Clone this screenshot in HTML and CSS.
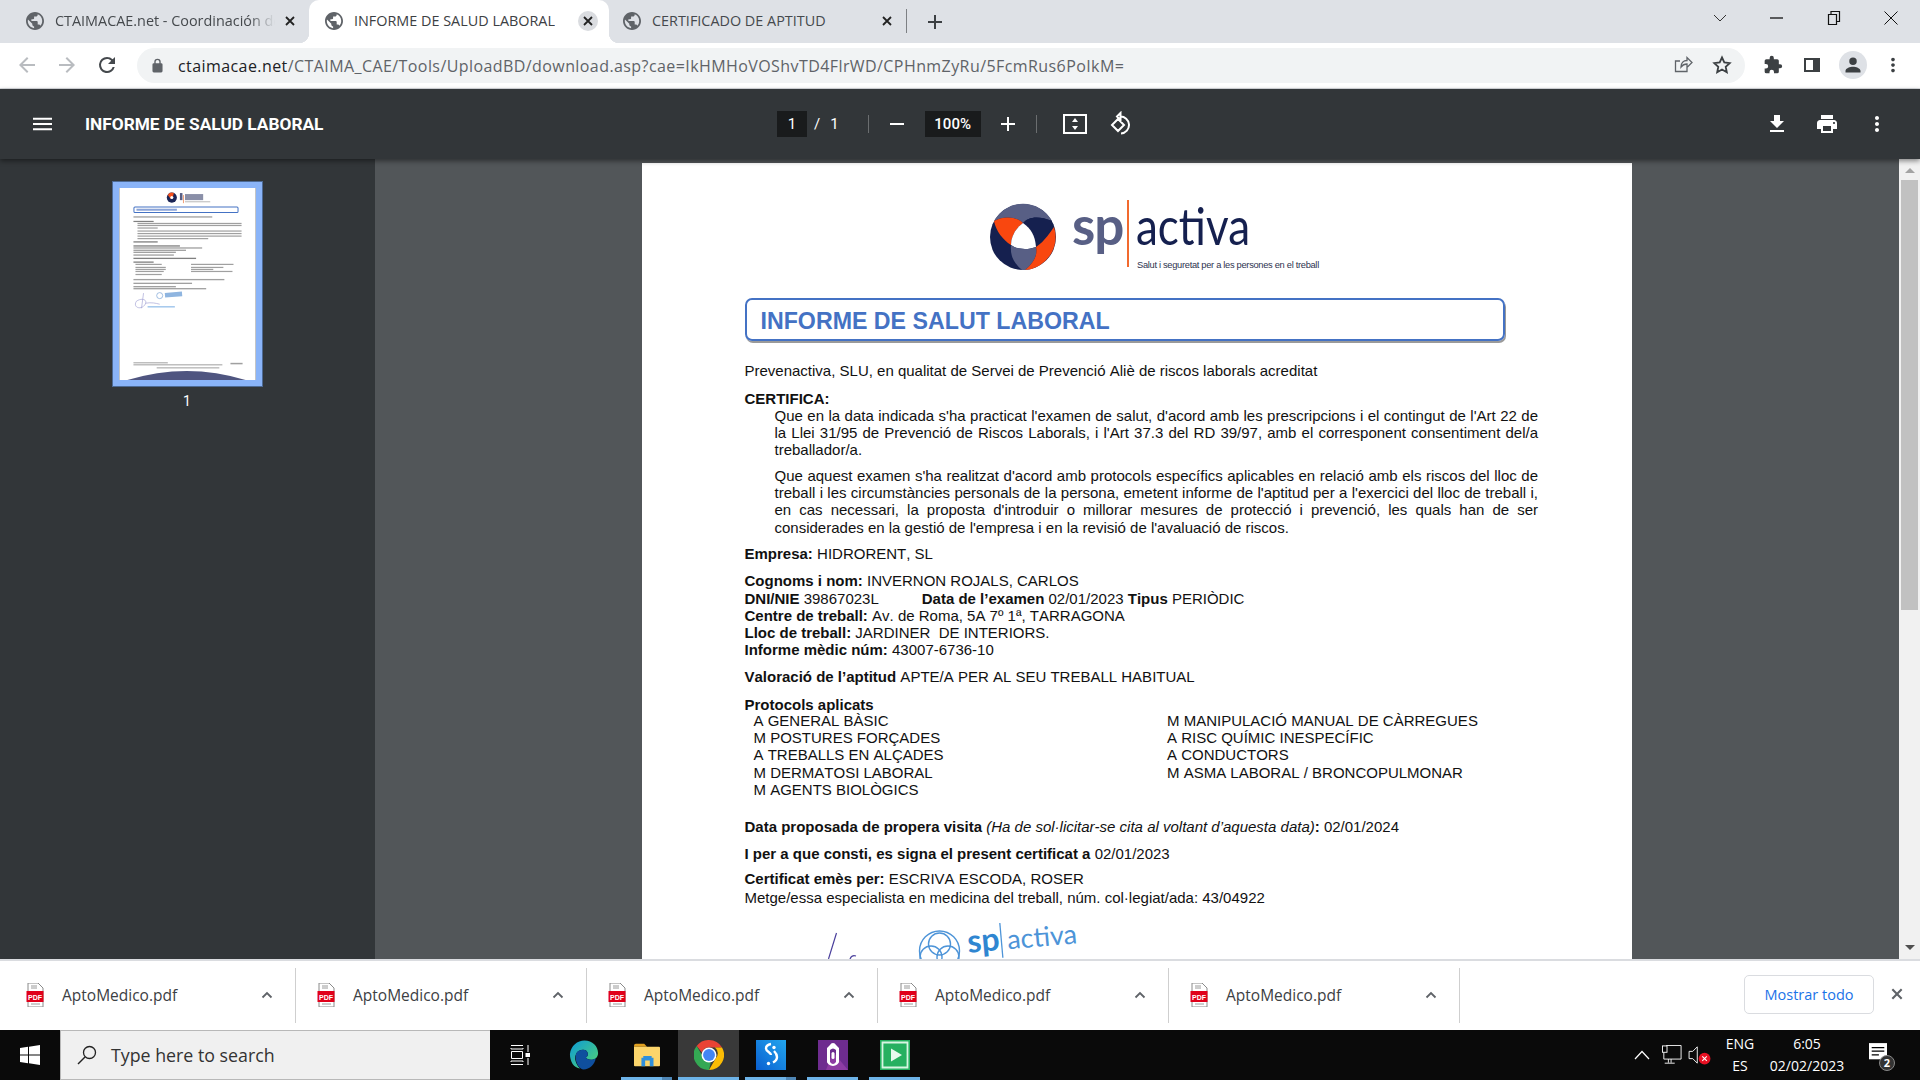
FILE: index.html
```html
<!DOCTYPE html>
<html lang="ca">
<head>
<meta charset="utf-8">
<title>INFORME DE SALUD LABORAL</title>
<link rel="stylesheet" href="styles.css">
</head>
<body>
<svg class="defs" width="0" height="0">
  <symbol id="globe" viewBox="2 2 20 20"><path d="M12 2C6.48 2 2 6.48 2 12s4.48 10 10 10 10-4.48 10-10S17.52 2 12 2zm-1 17.93c-3.95-.49-7-3.85-7-7.93 0-.62.08-1.21.21-1.79L9 15v1c0 1.1.9 2 2 2v1.93zm6.9-2.54c-.26-.81-1-1.39-1.9-1.39h-1v-3c0-.55-.45-1-1-1H8v-2h2c.55 0 1-.45 1-1V7h2c1.1 0 2-.9 2-2v-.41c2.93 1.19 5 4.06 5 7.41 0 2.08-.8 3.97-2.1 5.39z"/></symbol>
  <symbol id="x" viewBox="0 0 12 12"><path d="M2 2l8 8M10 2l-8 8" fill="none" stroke="currentColor" stroke-width="1.8"/></symbol>
  <symbol id="caret" viewBox="0 0 12 8"><path d="M1.5 6.5L6 2l4.5 4.5" fill="none" stroke="currentColor" stroke-width="1.8"/></symbol>
  <symbol id="pdf" viewBox="0 0 18 24"><path d="M2 0h10l5 5v19H2z" fill="#fff" stroke="#8a8a8a"/><path d="M5 3h6M5 5h6M5 21h9" stroke="#9a9a9a"/><rect x="0.5" y="8" width="17" height="11" fill="#e0001a"/><text x="9" y="16.5" class="pdf-label">PDF</text></symbol>
</svg>

<header class="tabstrip">
  <div class="tab first">
    <svg class="fav"><use href="#globe"/></svg>
    <span class="tab-title fade">CTAIMACAE.net - Coordinación de Actividades</span>
    <svg class="tab-x"><use href="#x"/></svg>
  </div>
  <div class="tab active">
    <svg class="fav"><use href="#globe"/></svg>
    <span class="tab-title">INFORME DE SALUD LABORAL</span>
    <span class="tab-x-bg"><svg class="tab-x"><use href="#x"/></svg></span>
  </div>
  <div class="tab third">
    <svg class="fav"><use href="#globe"/></svg>
    <span class="tab-title">CERTIFICADO DE APTITUD</span>
    <svg class="tab-x"><use href="#x"/></svg>
  </div>
  <svg class="newtab" viewBox="0 0 16 16"><path d="M8 1v14M1 8h14" stroke="#3c4043" stroke-width="2"/></svg>
  <div class="winctrl">
    <svg viewBox="0 0 14 14"><path d="M1 4l6 6 6-6" fill="none" stroke="#333" stroke-width="1"/></svg>
    <svg viewBox="0 0 14 14"><path d="M0 7h13" stroke="#111" stroke-width="1.3"/></svg>
    <svg viewBox="0 0 14 14"><path d="M1.5 3.5h8v10h-8zM4 3.5V.5h8.500v10h-3" fill="none" stroke="#111" stroke-width="1.2"/></svg>
    <svg viewBox="0 0 14 14"><path d="M.5.5l13 13M13.5.5l-13 13" stroke="#111" stroke-width="1"/></svg>
  </div>
</header>

<nav class="toolbar">
  <svg class="nav-ic ghost" viewBox="0 0 24 24"><path d="M20 11H7.830l5.590-5.590L12 4l-8 8 8 8 1.410-1.410L7.830 13H20z"/></svg>
  <svg class="nav-ic ghost" viewBox="0 0 24 24"><path d="M12 4l-1.410 1.410L16.170 11H4v2h12.170l-5.580 5.590L12 20l8-8z"/></svg>
  <svg class="nav-ic" viewBox="0 0 24 24"><path d="M17.650 6.350A7.960 7.960 0 0 0 12 4a8 8 0 1 0 7.730 10h-2.080A6 6 0 1 1 12 6c1.660 0 3.140.69 4.220 1.780L13 11h7V4z"/></svg>
  <div class="omnibox">
    <svg class="lock" viewBox="0 0 12 16"><path d="M10 5.500H9.500V4a3.500 3.500 0 0 0-7 0v1.500H2A1.500 1.500 0 0 0 .5 7v7A1.500 1.500 0 0 0 2 15.500h8a1.500 1.500 0 0 0 1.500-1.500V7A1.500 1.500 0 0 0 10 5.500zM4 4a2 2 0 0 1 4 0v1.500H4z"/></svg>
    <span class="url"><span class="host">ctaimacae.net</span>/CTAIMA_CAE/Tools/UploadBD/download.asp?cae=IkHMHoVOShvTD4FlrWD/CPHnmZyRu/5FcmRus6PoIkM=</span>
    <svg class="omni-ic" viewBox="0 0 20 20"><path d="M14 10v6.500H2.500V6H7M8 12c0-4 2.500-6.500 6-6.500V2.500l5 5-5 5V9c-2.500 0-4.500 1-6 3z" fill="none" stroke="#5f6368" stroke-width="1.3"/></svg>
    <svg class="omni-ic" viewBox="0 0 20 20"><path d="M10 2.500l2.300 5 5.400.6-4 3.700 1.100 5.400L10 14.500 5.200 17.200l1.100-5.400-4-3.700 5.400-.6z" fill="none" stroke="#3c4043" stroke-width="1.8"/></svg>
  </div>
  <svg class="tool-ic puzzle" viewBox="0 0 24 24"><path d="M20.500 11H19V7a2 2 0 0 0-2-2h-4V3.500a2.500 2.500 0 0 0-5 0V5H4a2 2 0 0 0-2 2v3.800h1.500a2.700 2.700 0 0 1 0 5.400H2V20a2 2 0 0 0 2 2h3.800v-1.500a2.700 2.700 0 0 1 5.400 0V22H17a2 2 0 0 0 2-2v-4h1.500a2.500 2.500 0 0 0 0-5z"/></svg>
  <svg class="tool-ic panel" viewBox="0 0 18 18"><path d="M1 2h16v14H1z" fill="#3c4043"/><path d="M3 4h7v10H3z" fill="#fff"/></svg>
  <span class="avatar"><svg viewBox="0 0 24 24"><path d="M12 12a4.500 4.500 0 1 0 0-9 4.500 4.500 0 0 0 0 9zm0 2c-3.300 0-9 1.700-9 5v2h18v-2c0-3.300-5.700-5-9-5z"/></svg></span>
  <svg class="tool-ic dots" viewBox="0 0 24 24"><path d="M12 8c1.100 0 2-.9 2-2s-.9-2-2-2-2 .9-2 2 .9 2 2 2zm0 2c-1.100 0-2 .9-2 2s.9 2 2 2 2-.9 2-2-.9-2-2-2zm0 6c-1.100 0-2 .9-2 2s.9 2 2 2 2-.9 2-2-.9-2-2-2z"/></svg>
</nav>

<section class="pdfbar">
  <div class="pdfbar-left">
    <svg class="pdf-ic menu" viewBox="3 6 18 12"><path d="M3 18h18v-2H3v2zm0-5h18v-2H3v2zm0-7v2h18V6H3z"/></svg>
    <span class="pdf-title">INFORME DE SALUD LABORAL</span>
  </div>
  <div class="pdfbar-mid">
    <span class="field page-field">1</span>
    <span class="pager">/</span>
    <span class="pager last">1</span>
    <span class="vsep"></span>
    <svg class="pdf-ic minus" viewBox="0 0 16 16"><path d="M1 7h14v2H1z"/></svg>
    <span class="field zoom-field">100%</span>
    <svg class="pdf-ic plus" viewBox="0 0 16 16"><path d="M7 1h2v6h6v2H9v6H7V9H1V7h6z"/></svg>
    <span class="vsep"></span>
    <svg class="pdf-ic fit" viewBox="0 0 24 20"><path d="M1 1h22v18H1z" fill="none" stroke="#fff" stroke-width="2"/><path d="M12 4l3 4H9zM12 16l-3-4h6z" fill="#fff"/></svg>
    <svg class="pdf-ic rotate" viewBox="0 0 24 24"><path d="M12.500 1L9 4.500 12.500 8zM12 4.500a8.500 8.500 0 0 1 1 17M10 7l6 6-6 6-6-6z" fill="none" stroke="#fff" stroke-width="2"/></svg>
  </div>
  <div class="pdfbar-right">
    <svg class="pdf-ic" viewBox="0 0 24 24"><path d="M19 9h-4V3H9v6H5l7 7 7-7zM5 18v2h14v-2H5z"/></svg>
    <svg class="pdf-ic" viewBox="0 0 24 24"><path d="M19 8H5c-1.660 0-3 1.340-3 3v6h4v4h12v-4h4v-6c0-1.660-1.340-3-3-3zm-3 11H8v-5h8v5zm3-7c-.55 0-1-.45-1-1s.45-1 1-1 1 .45 1 1-.45 1-1 1zm-1-9H6v4h12V3z"/></svg>
    <svg class="pdf-ic" viewBox="0 0 24 24"><path d="M12 8c1.100 0 2-.9 2-2s-.9-2-2-2-2 .9-2 2 .9 2 2 2zm0 2c-1.100 0-2 .9-2 2s.9 2 2 2 2-.9 2-2-.9-2-2-2zm0 6c-1.100 0-2 .9-2 2s.9 2 2 2 2-.9 2-2-.9-2-2-2z"/></svg>
  </div>
</section>

<main class="viewer">
  <aside class="sidebar">
    <div class="thumb">
      <svg viewBox="0 0 135 190" class="thumb-svg">
        <rect width="135" height="190" fill="#fff"/>
        <circle cx="52" cy="9.500" r="5" fill="#1b2556"/><path d="M48 7a5 5 0 0 1 6-2l-1 4-2 2z" fill="#f4511e"/><circle cx="52" cy="9.500" r="1.500" fill="#fff"/>
        <rect x="60" y="5" width="2.500" height="7" fill="#585f85"/><rect x="63" y="7" width="1" height="8" fill="#f2a07a"/><rect x="65" y="6" width="18" height="6" fill="#8a8fa8"/><rect x="65" y="13" width="25" height="1.200" fill="#c5c5c5"/>
        <rect x="14.500" y="18.700" width="103" height="5.600" rx="1" fill="#fff" stroke="#4472c4"/><rect x="17" y="20.500" width="40" height="2" fill="#8ba4d8"/>
        <g fill="#a0a0a0">
          <rect x="14" y="28" width="78" height="1.300"/><rect x="14" y="32.500" width="20" height="1.200" fill="#808080"/>
          <rect x="18" y="34.500" width="103" height="1.200"/><rect x="18" y="36.500" width="103" height="1.200"/><rect x="18" y="39" width="20" height="1.200"/>
          <rect x="18" y="42" width="103" height="1.200"/><rect x="18" y="44.500" width="103" height="1.200"/><rect x="18" y="47" width="103" height="1.200"/><rect x="18" y="49.500" width="70" height="1.200"/>
          <rect x="14" y="52.700" width="24" height="1.300" fill="#808080"/>
          <rect x="14" y="56.700" width="46" height="1.300" fill="#808080"/><rect x="14" y="58.700" width="68" height="1.300"/><rect x="14" y="61" width="52" height="1.300"/><rect x="14" y="63" width="42" height="1.300"/><rect x="14" y="65.700" width="40" height="1.300"/>
          <rect x="14" y="69" width="62" height="1.300" fill="#808080"/><rect x="14" y="72.700" width="20" height="1.300" fill="#808080"/>
          <rect x="16" y="75" width="26" height="1.200"/><rect x="16" y="78" width="30" height="1.200"/><rect x="16" y="80" width="30" height="1.200"/><rect x="16" y="82" width="28" height="1.200"/><rect x="16" y="85" width="26" height="1.200"/>
          <rect x="71" y="75" width="42" height="1.200"/><rect x="71" y="78" width="32" height="1.200"/><rect x="71" y="80" width="22" height="1.200"/><rect x="71" y="82" width="41" height="1.200"/>
          <rect x="14" y="90" width="90" height="1.300"/><rect x="14" y="93.700" width="58" height="1.300"/><rect x="14" y="97" width="42" height="1.300"/><rect x="14" y="99" width="72" height="1.300"/>
          <rect x="14" y="172.500" width="34" height="1"/><rect x="14" y="174.500" width="88" height="1"/><rect x="110" y="173" width="12" height="1.500"/><rect x="37" y="177.500" width="62" height="1"/>
        </g>
        <circle cx="40" cy="106.500" r="3" fill="none" stroke="#7ea6d8" stroke-width=".7"/><rect x="45" y="104" width="17" height="4.500" fill="#8fb5e0" transform="rotate(-5 45 104)"/>
        <path d="M24 104l-2 15M17 112c6-4 12-1 8 4s-12 2-8-4zM26 114c6-1 10 0 14 1" fill="none" stroke="#9a9ad0" stroke-width=".6"/>
        <rect x="28" y="117" width="27" height="1.200" fill="#8fbbe8"/>
        <path d="M8 190q59-18 117 0z" fill="#4f5580"/>
      </svg>
    </div>
    <span class="thumb-num">1</span>
  </aside>

  <div class="canvas">
    <article class="page">
      <svg class="logo" viewBox="0 0 345 90">
        <g transform="translate(41 42)">
          <circle r="33" fill="#15204f"/>
          <path d="M-29-16A33 33 0 0 1 29-16C15-22 5-20 0-14-6-20-18-22-29-16Z" fill="#585f85"/>
          <path d="M-29-16C-18-22-6-20 0-14-8-8-12 0-12 8-20 3-27-6-29-16Z" fill="#f9470f"/>
          <path d="M29-16C15-22 5-20 0-14 8-8 12-2 13 10 22 4 28-6 29-16Z" fill="#15204f"/>
          <path d="M0-14C8-8 12-2 13 10 5 13-5 13-12 8-12 0-8-8 0-14Z" fill="#fff"/>
          <path d="M-12 8C-5 13 5 13 13 10 15 18 10 27 2 33A33 33 0 0 1-1 33C-10 25-13 18-12 8Z" fill="#585f85"/>
          <path d="M13 10C22 4 28-6 31-10A33 33 0 0 1 2 33C10 27 15 18 13 10Z" fill="#f9470f"/>
        </g>
        <text x="90" y="50" class="logo-sp">sp</text>
        <rect x="145" y="5" width="2" height="67" fill="#f26a2e"/>
        <text x="154" y="50" class="logo-activa" textLength="114" lengthAdjust="spacingAndGlyphs">activa</text>
        <text x="155" y="73" class="logo-tag">Salut i seguretat per a les persones en el treball</text>
      </svg>

      <h1 class="doc-title">INFORME DE SALUT LABORAL</h1>

      <p class="line intro">Prevenactiva, SLU, en qualitat de Servei de Prevenció Aliè de riscos laborals acreditat</p>

      <p class="line head"><b>CERTIFICA:</b></p>
      <p class="just">Que en la data indicada s'ha practicat l'examen de salut, d'acord amb les prescripcions i el contingut de l'Art 22 de la Llei 31/95 de Prevenció de Riscos Laborals, i l'Art 37.3 del RD 39/97, amb el corresponent consentiment del/a treballador/a.</p>
      <p class="just second">Que aquest examen s'ha realitzat d'acord amb protocols específics aplicables en relació amb els riscos del lloc de treball i les circumstàncies personals de la persona, emetent informe de l'aptitud per a l'exercici del lloc de treball i, en cas necessari, la proposta d'introduir o millorar mesures de protecció i prevenció, les quals han de ser considerades en la gestió de l'empresa i en la revisió de l'avaluació de riscos.</p>

      <p class="line empresa"><b>Empresa:</b> HIDRORENT, SL</p>

      <div class="cognoms">
        <p class="line"><b>Cognoms i nom:</b> INVERNON ROJALS, CARLOS</p>
        <p class="line"><b>DNI/NIE</b> 39867023L<span class="tabgap"></span><b>Data de l’examen</b> 02/01/2023 <b>Tipus</b> PERIÒDIC</p>
        <p class="line"><b>Centre de treball:</b> Av. de Roma, 5A 7º 1ª, TARRAGONA</p>
        <p class="line"><b>Lloc de treball:</b> JARDINER&nbsp; DE INTERIORS.</p>
        <p class="line"><b>Informe mèdic núm:</b> 43007-6736-10</p>
      </div>

      <p class="line valoracio"><b>Valoració de l’aptitud</b> APTE/A PER AL SEU TREBALL HABITUAL</p>

      <p class="line protocols"><b>Protocols aplicats</b></p>
      <div class="proto-grid">
        <ul>
          <li>A GENERAL BÀSIC</li>
          <li>M POSTURES FORÇADES</li>
          <li>A TREBALLS EN ALÇADES</li>
          <li>M DERMATOSI LABORAL</li>
          <li>M AGENTS BIOLÒGICS</li>
        </ul>
        <ul>
          <li>M MANIPULACIÓ MANUAL DE CÀRREGUES</li>
          <li>A RISC QUÍMIC INESPECÍFIC</li>
          <li>A CONDUCTORS</li>
          <li>M ASMA LABORAL / BRONCOPULMONAR</li>
        </ul>
      </div>

      <p class="line propera"><b>Data proposada de propera visita</b> <i>(Ha de sol·licitar-se cita al voltant d’aquesta data)</i><b>:</b> 02/01/2024</p>
      <p class="line consti"><b>I per a que consti, es signa el present certificat a</b> 02/01/2023</p>
      <p class="line emes"><b>Certificat emès per:</b> ESCRIVA ESCODA, ROSER</p>
      <p class="line metge">Metge/essa especialista en medicina del treball, núm. col·legiat/ada: 43/04922</p>

      <svg class="stamp" viewBox="0 0 320 50">
        <path d="M51.500 19l-8 26M65 45c1-3 3-4 6-3" fill="none" stroke="#4a3f9c" stroke-width="1.200"/>
        <g fill="none" stroke="#4d94d8" stroke-width="1.400">
          <circle cx="154.500" cy="37" r="20"/><circle cx="146" cy="43" r="11"/><circle cx="163" cy="43" r="11"/><circle cx="154.500" cy="30" r="11"/>
        </g>
        <g transform="rotate(-5 215 30)">
          <text x="182.500" y="36" class="stamp-sp">sp</text>
          <rect x="216" y="9" width="1.300" height="35" fill="#4d94d8"/>
          <text x="222.500" y="36" class="stamp-activa">activa</text>
        </g>
      </svg>
    </article>
  </div>

  <div class="scrollbar">
    <span class="arrow up"></span>
    <span class="thumbbar"></span>
    <span class="arrow down"></span>
  </div>
</main>

<section class="downloads">
  <div class="dl"><svg class="dl-ic"><use href="#pdf"/></svg><span class="dl-name">AptoMedico.pdf</span><svg class="dl-caret"><use href="#caret"/></svg></div>
  <div class="dl"><svg class="dl-ic"><use href="#pdf"/></svg><span class="dl-name">AptoMedico.pdf</span><svg class="dl-caret"><use href="#caret"/></svg></div>
  <div class="dl"><svg class="dl-ic"><use href="#pdf"/></svg><span class="dl-name">AptoMedico.pdf</span><svg class="dl-caret"><use href="#caret"/></svg></div>
  <div class="dl"><svg class="dl-ic"><use href="#pdf"/></svg><span class="dl-name">AptoMedico.pdf</span><svg class="dl-caret"><use href="#caret"/></svg></div>
  <div class="dl"><svg class="dl-ic"><use href="#pdf"/></svg><span class="dl-name">AptoMedico.pdf</span><svg class="dl-caret"><use href="#caret"/></svg></div>
  <button class="showall">Mostrar todo</button>
  <svg class="dl-close"><use href="#x"/></svg>
</section>

<footer class="taskbar">
  <div class="start"><svg viewBox="0 0 20 20"><path d="M0 3l8-1.200V9.500H0zM9 1.700L20 0v9.500H9zM0 10.500h8v7.700L0 17zM9 10.500h11V20L9 18.300z" fill="#fff"/></svg></div>
  <div class="search">
    <svg viewBox="0 0 20 20"><circle cx="12.500" cy="7.500" r="6" fill="none" stroke="#222" stroke-width="1.300"/><path d="M8 12l-7 7" stroke="#222" stroke-width="1.400"/></svg>
    <span>Type here to search</span>
  </div>
  <div class="task taskview"><svg viewBox="0 0 20 20"><path d="M1 .5h12M1 19.500h12M1 3v1h12V3M1 17v-1h12v1M1.500 6.500h11v7h-11zM18 0v7M18 13v7" fill="none" stroke="#fff" stroke-width="1"/><rect x="15.500" y="8" width="5" height="4" fill="#fff"/></svg></div>
  <div class="task edge">
    <svg viewBox="0 0 32 32">
      <defs><linearGradient id="edgeA" x1="0" y1="0" x2="1" y2="1"><stop offset="0" stop-color="#0c9ad8"/><stop offset="1" stop-color="#54d66f"/></linearGradient></defs>
      <path d="M1 15C2 6 9 .5 16.500.5 25 .5 31 6.500 31 14c0 4-3 7-7.500 7-3 0-5-1-5.500-2.500 3.500-1 3-8-3-8-6.500 0-9.500 6-8 12 .7 3 2.500 6 5 8C5 30 1 23 1 15z" fill="url(#edgeA)"/>
      <path d="M7.500 22C6 14 9 10.500 15 10.500c6 0 6.500 7 3 8 .5 1.500 2.500 2.500 5.500 2.500 2 0 4-.5 5-2C28 26 22 31.500 15.500 31.500 11.500 30.500 8.500 26.500 7.500 22z" fill="#0f4f9e"/>
    </svg>
  </div>
  <div class="task files lit multi">
    <svg viewBox="0 0 30 28"><path d="M1 4a2 2 0 0 1 2-2h9l3 3h-14z" fill="#e0a020"/><path d="M1 5h27a1 1 0 0 1 1 1v19a1 1 0 0 1-1 1H2a1 1 0 0 1-1-1z" fill="#fcd56b"/><path d="M9 26v-9h2v-2h9v2h2v9h-4v-6h-5v6z" fill="#2f8fdc"/></svg>
  </div>
  <div class="task chrome lit">
    <svg viewBox="0 0 48 48"><path d="M24 0a24 24 0 0 1 20.800 12H24a12 12 0 0 0-11.300 8L4.300 9.500A24 24 0 0 1 24 0z" fill="#ea4335"/><path d="M44.800 12A24 24 0 0 1 24 48l10.400-18a12 12 0 0 0-1-18z" fill="#fbbc05"/><path d="M24 48A24 24 0 0 1 4.300 9.500l10.400 18A12 12 0 0 0 27 35.600z" fill="#34a853"/><circle cx="24" cy="24" r="12" fill="#fff"/><circle cx="24" cy="24" r="9.500" fill="#4285f4"/></svg>
  </div>
  <div class="task square lit multi">
    <svg viewBox="0 0 30 30">
      <defs><linearGradient id="sA" x1="0" y1="1" x2="1" y2="0"><stop offset="0" stop-color="#0a5fd0"/><stop offset="1" stop-color="#22a6ee"/></linearGradient></defs>
      <rect width="30" height="30" fill="url(#sA)"/>
      <path d="M15 4c-3 .5-5 2-5 4.500 0 3 5 4 5 6.500" fill="none" stroke="#fff" stroke-width="2.400"/><path d="M18 11c2 2 3 3.500 3 6 0 3-2 4.500-4 5.500" fill="none" stroke="#fff" stroke-width="2.400"/><circle cx="12.500" cy="23.500" r="1.700" fill="#fff"/><circle cx="18" cy="7.500" r="1.700" fill="#fff"/>
    </svg>
  </div>
  <div class="task square lit">
    <svg viewBox="0 0 30 30"><rect width="30" height="30" fill="#6e2c8f"/><path d="M8 30L15 12l15 18z" fill="#8d3ca3"/><path d="M15 3a3.500 3.500 0 0 1 3 2l3 3v14c0 1-3 4-6 4s-6-3-6-4V8l3-3a3.500 3.500 0 0 1 3-2zM12 10v12c1 1 2 2 3 2s2-1 3-2V10c-1-1-2-1.500-3-1.500S13 9 12 10z" fill="#fff"/><rect x="13.500" y="12" width="3" height="7" rx="1.500" fill="#fff"/></svg>
  </div>
  <div class="task square lit">
    <svg viewBox="0 0 30 30"><rect width="30" height="30" fill="#26b060"/><path d="M2.500 2.500h25v25h-25z" fill="none" stroke="#d7f5e2" stroke-width="1.800"/><path d="M11 8.500L22 15 11 21.500z" fill="#e6f9ee"/></svg>
  </div>
  <div class="tray">
    <svg class="tray-caret" viewBox="0 0 16 10"><path d="M1 9l7-7.500L15 9" fill="none" stroke="#fff" stroke-width="1.200"/></svg>
    <svg class="tray-net" viewBox="0 0 22 22"><path d="M4.500.5H21v15H2V8M7 15.500v4M3 20h11M10 15.500v4" fill="none" stroke="#fff"/><rect x=".5" y="1" width="5" height="7" fill="#000" stroke="#fff"/></svg>
    <span class="tray-sound">
      <svg viewBox="0 0 26 22"><path d="M1 7h4l5-5v18l-5-5H1z" fill="none" stroke="#fff"/><circle cx="18" cy="15" r="6.500" fill="#e81123"/><path d="M15.500 12.500l5 5M20.500 12.500l-5 5" stroke="#fff" stroke-width="1.200"/></svg>
    </span>
    <div class="clock-lang"><span>ENG</span><span>ES</span></div>
    <div class="clock"><span>6:05</span><span>02/02/2023</span></div>
    <span class="notify">
      <svg viewBox="0 0 20 22"><path d="M0 0h20v18H0z" fill="#fff"/><path d="M3 5h14M3 9h14M3 13h8" stroke="#000" stroke-width="1.400"/></svg>
      <b>2</b>
    </span>
  </div>
</footer>
</body>
</html>
```

FILE: styles.css
```css
* { box-sizing: border-box; }
html, body { margin: 0; height: 100%; }
p, h1, ul { margin: 0; }
body {
  display: flex;
  flex-direction: column;
  height: 1080px;
  overflow: hidden;
  font-family: "Open Sans", "Liberation Sans", sans-serif;
  background: #fff;
}
.defs { position: absolute; }
.pdf-label { font: bold 7px "Liberation Sans", sans-serif; fill: #fff; text-anchor: middle; }

/* tab strip */
.tabstrip { flex: 0 0 43px; display: flex; align-items: stretch; background: #dee1e6; color: #45494d; }
.tab { position: relative; display: flex; align-items: center; font-size: 14.4px; padding-bottom: 1px; }
.tab.first { width: 309px; padding-left: 26px; }
.tab.active { width: 300px; padding-left: 16px; background: #fff; border-radius: 10px 10px 0 0; color: #3c4043; }
.tab.active::before, .tab.active::after {
  content: ""; position: absolute; bottom: 0; width: 10px; height: 10px;
}
.tab.active::before { left: -10px; background: radial-gradient(circle at 0 0, transparent 10px, #fff 10.5px); }
.tab.active::after { right: -10px; background: radial-gradient(circle at 100% 0, transparent 10px, #fff 10.5px); }
.tab.third { width: 298px; padding-left: 14px; }
.tab.third::after { content: ""; position: absolute; right: 0; top: 9px; height: 24px; width: 1px; background: #7d8084; }
.fav { flex: none; width: 18px; height: 18px; fill: #5f6368; margin-right: 11px; }
.tab-title { flex: 0 0 auto; white-space: nowrap; overflow: hidden; margin-top: -2px; }
.tab-title.fade { width: 220px; -webkit-mask-image: linear-gradient(90deg, #000 88%, transparent 100%); mask-image: linear-gradient(90deg, #000 88%, transparent 100%); }
.tab-x { flex: none; width: 12px; height: 12px; color: #222; }
.first .tab-x { margin-left: 9px; }
.third .tab-x { margin-left: auto; margin-right: 14px; }
.tab-x-bg { margin-left: auto; margin-right: 11px; width: 20px; height: 20px; border-radius: 50%; background: #dadce0; display: flex; align-items: center; justify-content: center; }
.newtab { width: 16px; height: 16px; align-self: center; margin-left: 20px; }
.winctrl { margin-left: auto; display: flex; align-items: center; gap: 43px; padding-right: 22px; height: 36px; }
.winctrl svg { width: 14px; height: 14px; }

/* omnibar */
.toolbar { flex: 0 0 46px; display: flex; align-items: center; background: #fff; border-bottom: 1px solid #dadce0; padding: 0 0 1px 15px; }
.nav-ic { width: 24px; height: 24px; fill: #45494d; margin-right: 16px; flex: none; }
.nav-ic.ghost { fill: #b9bcc0; }
.omnibox { width: 1608px; margin-left: 2px; height: 35px; border-radius: 18px; background: #f1f3f4; display: flex; align-items: center; padding: 0 13px 0 15px; flex: none; }
.lock { width: 11px; height: 15px; fill: #5f6368; margin-right: 15px; flex: none; }
.url { flex: 1; font-size: 16px; letter-spacing: .42px; color: #5f6368; white-space: nowrap; overflow: hidden; padding-top: 2px; }
.host { color: #202124; }
.omni-ic { width: 20px; height: 20px; margin-left: 19px; flex: none; }
.tool-ic { flex: none; fill: #3c4043; }
.puzzle { width: 20px; height: 20px; margin-left: 18px; }
.panel { width: 18px; height: 18px; margin-left: 20px; }
.avatar { flex: none; width: 28px; height: 28px; margin-left: 18px; border-radius: 50%; background: #dee1e6; display: flex; align-items: center; justify-content: center; }
.avatar svg { width: 20px; height: 20px; fill: #3c4043; }
.dots { width: 22px; height: 22px; margin-left: 15px; }

/* pdf toolbar */
.pdfbar { position: relative; z-index: 2; flex: 0 0 70px; display: flex; align-items: center; background: #323639; color: #fff; box-shadow: 0 2px 5px rgba(0,0,0,.45); }
.pdfbar-left { flex: 0 0 777px; display: flex; align-items: center; padding-left: 33px; }
.pdf-ic { flex: none; width: 24px; height: 24px; fill: #fff; }
.menu { width: 19px; height: 14px; margin-right: 33px; }
.pdf-title { font: 700 17.3px "Roboto", "Open Sans", sans-serif; }
.pdfbar-mid { display: flex; align-items: center; font: 15px "Roboto", sans-serif; }
.field { display: flex; align-items: center; justify-content: center; height: 26px; background: #191b1c; }
.page-field { width: 30px; }
.pager { margin-left: 7px; }
.pager.last { margin-left: 10px; }
.vsep { width: 1px; height: 18px; background: #6b6e70; margin-left: 29px; }
.minus { width: 16px; height: 16px; margin: 0 20px 0 20px; }
.zoom-field { width: 56px; font-weight: 500; }
.plus { width: 16px; height: 16px; margin: 0 20px 0 19px; }
.plus + .vsep { margin-left: 0; }
.fit { width: 24px; height: 20px; margin-left: 26px; }
.rotate { width: 24px; height: 26px; margin-left: 21px; }
.pdfbar-right { margin-left: auto; display: flex; align-items: center; gap: 26px; padding-right: 31px; }

/* viewer */
.viewer { flex: 1 1 0; min-height: 0; display: flex; background: #525659; }
.sidebar { flex: 0 0 375px; background: #323639; display: flex; flex-direction: column; align-items: center; padding-top: 22px; }
.thumb { width: 151px; height: 206px; margin-left: -1px; border: 7px solid #8ab4f8; outline: 1px solid #4d6a94; outline-offset: -1px; flex: none; }
.thumb-svg { display: block; width: 137px; height: 192px; }
.thumb-num { color: #fff; font: 14px "Roboto", sans-serif; margin-top: 6px; margin-left: -1px; }
.canvas { flex: 1; min-width: 0; overflow: hidden; padding-top: 4px; display: flex; justify-content: center; }
.page { flex: 0 0 990px; height: 800px; background: #fff; padding: 0 94px 0 102.5px; font: 15px/17.3px "Liberation Sans", Arial, sans-serif; font-kerning: none; color: #111; }
.logo { display: block; width: 345px; height: 90px; margin: 32px 0 0 237.5px; }
.logo-sp { font: 700 53px "Lato", sans-serif; fill: #585f85; letter-spacing: -1px; }
.logo-activa { font: 400 53px "Lato", sans-serif; fill: #15204f; }
.logo-tag { font: 9.3px "Liberation Sans", sans-serif; fill: #2e3350; letter-spacing: -.3px; }
.doc-title { margin: 13px 0 0 0; width: 760px; height: 43px; border: 2.5px solid #4472c4; border-radius: 7px; box-shadow: 1px 2px 0 #9a9a9a; padding: 0 0 0 14px; font: 700 23.2px/42px "Liberation Sans", sans-serif; color: #4472c4; }
.intro { margin-top: 21.3px; }
.head { margin-top: 10px; }
.just { margin: 0 0 0 30px; text-align: justify; }
.just.second { margin-top: 8px; }
.empresa { margin-top: 9px; }
.cognoms { margin-top: 10px; }
.valoracio { margin-top: 9.5px; }
.protocols { margin-top: 10px; }
.tabgap { display: inline-block; width: 43px; }
.proto-grid { display: grid; grid-template-columns: 413.5px 1fr; padding-left: 9px; margin-top: -1px; }
.proto-grid ul { padding: 0; list-style: none; }
.propera { margin-top: 19.4px; }
.consti { margin-top: 10px; }
.emes { margin-top: 8px; }
.metge { margin-top: 1px; }
.stamp { display: block; width: 320px; height: 50px; margin: 8px 0 0 40px; }
.stamp-sp { font: 700 32px "Lato", sans-serif; fill: #2f86d1; }
.stamp-activa { font: 400 27px "Lato", sans-serif; fill: #4d94d8; }

.scrollbar { flex: 0 0 21px; background: #f1f1f1; display: flex; flex-direction: column; align-items: center; position: relative; z-index: 1; }
.arrow { width: 0; height: 0; border-left: 5px solid transparent; border-right: 5px solid transparent; }
.arrow.up { margin-top: 9px; border-bottom: 5px solid #a3a3a3; }
.arrow.down { margin-top: auto; margin-bottom: 9px; border-top: 5px solid #505050; }
.thumbbar { width: 17px; height: 430px; margin-top: 7px; background: #c1c1c1; }

/* downloads */
.downloads { flex: 0 0 71px; display: flex; align-items: center; background: #fff; border-top: 2px solid #dadce0; padding-left: 5px; }
.dl { flex: 0 0 291px; height: 55px; display: flex; align-items: center; border-right: 1px solid #cfcfcf; padding-left: 21px; }
.dl-ic { width: 18px; height: 24px; flex: none; margin-bottom: 2px; }
.dl-name { margin: 0 0 2px 18px; font-size: 15.5px; color: #3c4043; }
.dl-caret { margin-left: auto; margin-right: 22px; margin-bottom: 2px; width: 12px; height: 8px; color: #5f6368; }
.showall { margin: 0 0 3px 284px; width: 130px; height: 39px; background: #fff; border: 1px solid #dadce0; border-radius: 5px; color: #1a73e8; font: 500 14.5px "Open Sans", sans-serif; padding: 0; }
.dl-close { width: 14px; height: 14px; margin: 0 0 3px 16px; color: #5f6368; }

/* taskbar */
.taskbar { flex: 0 0 50px; display: flex; align-items: stretch; background: #0a0a0a; color: #fff; }
.start { flex: 0 0 60px; display: flex; align-items: center; justify-content: center; }
.start svg { width: 20px; height: 20px; }
.search { flex: 0 0 430px; display: flex; align-items: center; background: #f0f0f0; border: 2px solid #b8b8b8; border-width: 1px 0 1px 1px; padding-left: 16px; color: #333; font-size: 17.8px; }
.search svg { width: 20px; height: 20px; margin-right: 14px; flex: none; }
.task { position: relative; flex: none; display: flex; align-items: center; justify-content: center; }
.task.lit::after { content: ""; position: absolute; left: 0; right: 0; bottom: 0; height: 3px; background: #6db3e8; }
.task.multi::after { background: linear-gradient(90deg, #6db3e8 80%, #4f86b5 80%); }
.taskview { width: 59px; }
.taskview svg { width: 20px; height: 20px; }
.edge { width: 50px; margin-left: 10px; }
.edge svg { width: 30px; height: 30px; }
.files { width: 51px; margin-left: 12px; margin-right: 6px; }
.files svg { width: 28px; height: 26px; }
.chrome { width: 61px; background: #393939; }
.chrome svg { width: 30px; height: 30px; }
.square { width: 51px; margin-left: 6px; margin-right: 5px; }
.square svg { width: 30px; height: 30px; }
.tray { margin-left: auto; display: flex; align-items: center; padding-right: 29px; }
.tray-caret { width: 16px; height: 10px; }
.tray-net { width: 20px; height: 20px; margin-left: 12px; }
.tray-sound svg { display: block; width: 24px; height: 20px; margin-left: 6px; }
.clock-lang { display: flex; flex-direction: column; align-items: center; width: 34px; margin-left: 11px; font-size: 14px; line-height: 22px; }
.clock { display: flex; flex-direction: column; align-items: center; width: 80px; margin-left: 10px; font-size: 14px; line-height: 22px; }
.notify { position: relative; width: 22px; height: 24px; margin-left: 22px; }
.notify svg { display: block; width: 18px; height: 20px; }
.notify b { position: absolute; right: -4px; bottom: -4px; width: 16px; height: 16px; border-radius: 50%; background: #333; border: 1px solid #888; color: #fff; font: 700 11px/14px "Open Sans", sans-serif; text-align: center; }
```
